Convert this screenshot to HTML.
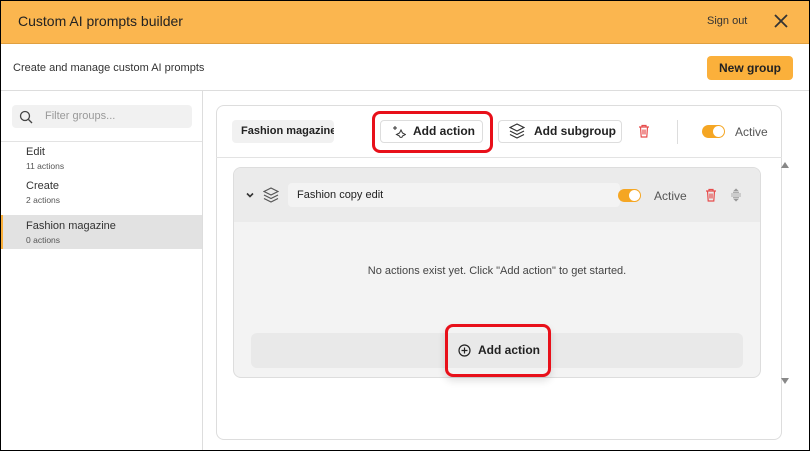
<!DOCTYPE html>
<html><head><style>
*{box-sizing:border-box;margin:0;padding:0}
body{width:810px;height:451px;font-family:"Liberation Sans",sans-serif;background:#fff;position:relative;overflow:hidden;color:#222}
.abs{position:absolute}
.frame{position:absolute;left:0;top:0;width:810px;height:451px;border:1px solid #000;pointer-events:none}
</style></head><body>
<div class="abs" style="left:0;top:0;width:810px;height:44px;background:#fbb64f;border-bottom:1px solid #e0a040"></div>
<div class="abs" style="left:18px;top:13px;font-size:14px;color:#222">Custom AI prompts builder</div>
<div class="abs" style="left:707px;top:15px;font-size:11px;color:#333">Sign out</div>
<svg class="abs" style="left:773px;top:13px" width="16" height="16"><path d="M2 2L14 14M14 2L2 14" stroke="#333" stroke-width="1.8"/></svg>
<div class="abs" style="left:13px;top:62px;font-size:11px;color:#333">Create and manage custom AI prompts</div>
<div class="abs" style="left:707px;top:56px;width:86px;height:24px;background:#fbb03b;border-radius:4px;font-size:12px;font-weight:bold;text-align:center;line-height:24px;color:#222">New group</div>
<div class="abs" style="left:0;top:90px;width:810px;height:1px;background:#ddd"></div>
<div class="abs" style="left:202px;top:91px;width:1px;height:360px;background:#ddd"></div>
<div class="abs" style="left:12px;top:105px;width:180px;height:23px;background:#f1f1f1;border-radius:4px"></div>
<svg class="abs" style="left:19px;top:110px" width="14" height="14"><circle cx="6" cy="6" r="4.5" fill="none" stroke="#444" stroke-width="1.3"/><path d="M9.5 9.5L13 13" stroke="#444" stroke-width="1.3"/></svg>
<div class="abs" style="left:45px;top:110px;font-size:11px;color:#999">Filter groups...</div>
<div class="abs" style="left:0;top:141px;width:202px;height:1px;background:#e3e3e3"></div>
<div class="abs" style="left:26px;top:146px;font-size:11px;color:#333">Edit</div>
<div class="abs" style="left:26px;top:161px;font-size:8.5px;color:#555">11 actions</div>
<div class="abs" style="left:26px;top:180px;font-size:11px;color:#333">Create</div>
<div class="abs" style="left:26px;top:195px;font-size:8.5px;color:#555">2 actions</div>
<div class="abs" style="left:0;top:215px;width:202px;height:34px;background:#e2e2e2;border-left:3px solid #fbb03b"></div>
<div class="abs" style="left:26px;top:220px;font-size:11px;color:#333">Fashion magazine</div>
<div class="abs" style="left:26px;top:235px;font-size:8.5px;color:#555">0 actions</div>

<div class="abs" style="left:216px;top:105px;width:566px;height:335px;border:1px solid #ddd;border-radius:8px"></div>
<div class="abs" style="left:216px;top:157px;width:566px;height:1px;background:#e3e3e3"></div>
<div class="abs" style="left:232px;top:120px;width:102px;height:23px;background:#f1f1f1;border-radius:4px;font-size:11px;font-weight:bold;line-height:23px;padding-left:9px;overflow:hidden;white-space:nowrap;color:#222">Fashion magazine</div>
<div class="abs" style="left:372px;top:111px;width:121px;height:42px;border:3px solid #e8101a;border-radius:8px"></div>
<div class="abs" style="left:380px;top:120px;width:103px;height:23px;border:1px solid #ddd;border-radius:4px;font-size:12px;font-weight:bold;line-height:21px;padding-left:32px;color:#222">Add action</div>
<svg class="abs" style="left:392px;top:124px" width="14" height="14"><path d="M3 2v4M1 4h4M9 6l1.5 3 3 1.5-3 1.5-1.5 3-1.5-3-3-1.5 3-1.5z" stroke="#333" stroke-width="1" fill="none"/></svg>
<div class="abs" style="left:498px;top:120px;width:124px;height:23px;border:1px solid #ddd;border-radius:4px;font-size:12px;font-weight:bold;line-height:21px;padding-left:35px;color:#222">Add subgroup</div>
<svg class="abs" style="left:509px;top:123px" width="16" height="16"><path d="M8 1L15 4.5 8 8 1 4.5z M1 8l7 3.5 7-3.5 M1 11.5l7 3.5 7-3.5" fill="none" stroke="#333" stroke-width="1.2"/></svg>
<svg class="abs" style="left:638px;top:124px" width="12" height="14"><path d="M1 3h10M4 3V1.5h4V3M2.5 3l.7 10h5.6l.7-10M5 5.5v5M7 5.5v5" fill="none" stroke="#e74c4c" stroke-width="1.2"/></svg>
<div class="abs" style="left:677px;top:120px;width:1px;height:24px;background:#ddd"></div>
<div class="abs" style="left:702px;top:125px;width:23px;height:13px;background:#f5a623;border-radius:7px"></div>
<div class="abs" style="left:713px;top:126px;width:11px;height:11px;background:#fff;border-radius:50%"></div>
<div class="abs" style="left:735px;top:125px;font-size:12px;color:#555">Active</div>

<div class="abs" style="left:233px;top:167px;width:528px;height:211px;background:#f3f3f3;border:1px solid #ddd;border-radius:8px;overflow:hidden"><div style="height:54px;background:#ebebeb"></div></div>
<svg class="abs" style="left:245px;top:190px" width="10" height="10"><path d="M2 3.5L5 6.5 8 3.5" fill="none" stroke="#333" stroke-width="1.6"/></svg>
<svg class="abs" style="left:263px;top:187px" width="16" height="16"><path d="M8 1L15 4.5 8 8 1 4.5z M1 8l7 3.5 7-3.5 M1 11.5l7 3.5 7-3.5" fill="none" stroke="#555" stroke-width="1.2"/></svg>
<div class="abs" style="left:288px;top:183px;width:332px;height:24px;background:#f3f3f3;border-radius:4px;font-size:11px;line-height:24px;padding-left:9px;color:#222">Fashion copy edit</div>
<div class="abs" style="left:618px;top:189px;width:23px;height:13px;background:#f5a623;border-radius:7px"></div>
<div class="abs" style="left:629px;top:190px;width:11px;height:11px;background:#fff;border-radius:50%"></div>
<div class="abs" style="left:654px;top:189px;font-size:12px;color:#555">Active</div>
<svg class="abs" style="left:705px;top:188px" width="12" height="14"><path d="M1 3h10M4 3V1.5h4V3M2.5 3l.7 10h5.6l.7-10M5 5.5v5M7 5.5v5" fill="none" stroke="#e74c4c" stroke-width="1.2"/></svg>
<svg class="abs" style="left:730px;top:188px" width="12" height="14"><path d="M6 1l-2 2h4zM6 13l-2-2h4zM1 6h10M1 8h10M3 4.5h6M3 9.5h6" fill="#999" stroke="#999" stroke-width=".8"/></svg>
<div class="abs" style="left:233px;top:265px;width:528px;text-align:center;font-size:11px;color:#444">No actions exist yet. Click "Add action" to get started.</div>
<div class="abs" style="left:251px;top:333px;width:492px;height:35px;background:#e9e9e9;border-radius:6px"></div>
<div class="abs" style="left:445px;top:324px;width:106px;height:53px;border:3px solid #e8101a;border-radius:8px;box-shadow:0 4px 8px rgba(0,0,0,.12)"></div>
<svg class="abs" style="left:458px;top:344px" width="13" height="13"><circle cx="6.5" cy="6.5" r="5.5" fill="none" stroke="#222" stroke-width="1.2"/><path d="M6.5 3.5v6M3.5 6.5h6" stroke="#222" stroke-width="1.2"/></svg>
<div class="abs" style="left:478px;top:343px;font-size:12px;font-weight:bold;color:#222">Add action</div>
<svg class="abs" style="left:780px;top:161px" width="10" height="8"><path d="M1 7L5 1 9 7z" fill="#888"/></svg>
<svg class="abs" style="left:780px;top:377px" width="10" height="8"><path d="M1 1L5 7 9 1z" fill="#888"/></svg>
<div class="frame"></div>
</body></html>
